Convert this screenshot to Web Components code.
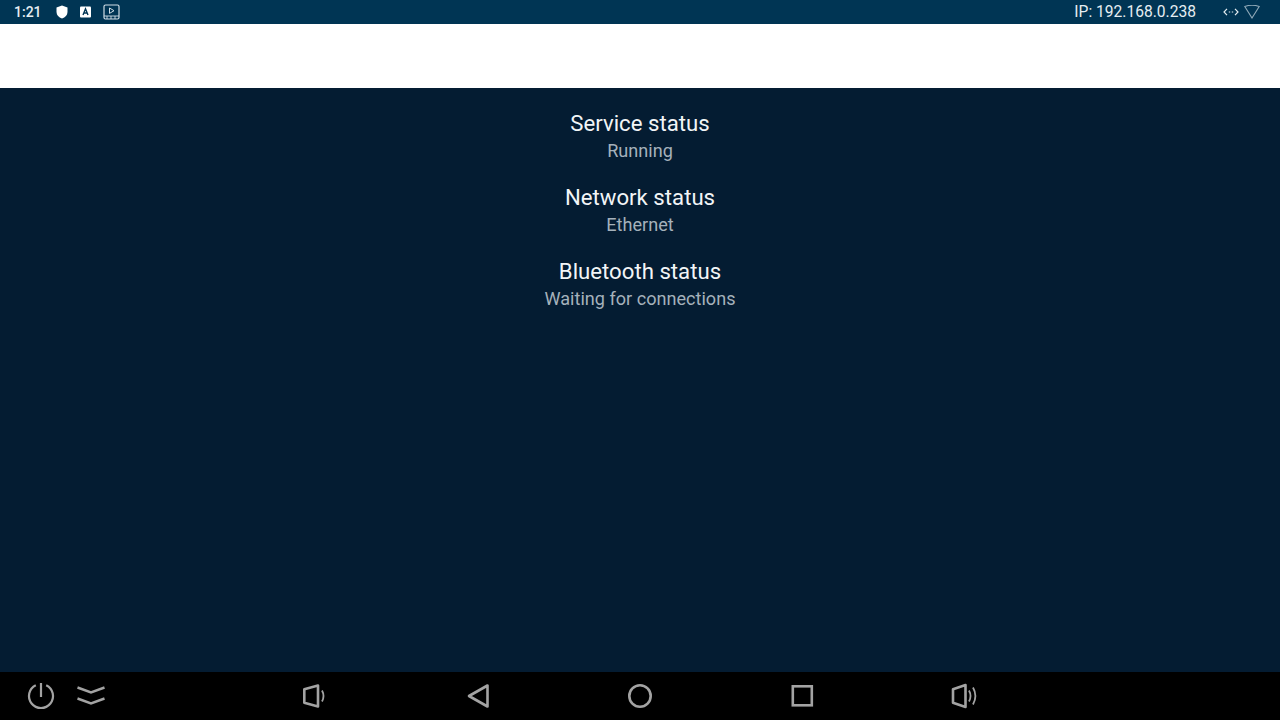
<!DOCTYPE html>
<html lang="en">
<head>
<meta charset="UTF-8">
<title>Status</title>
<style>
  html, body { margin: 0; height: 100%; background: #041c32; font-family: Roboto, sans-serif; }
  body { display: flex; flex-direction: column; height: 720px; overflow: hidden; }
  main-panel { flex: 1; }
</style>
</head>
<body>
  <status-bar time="1:21" ip="IP: 192.168.0.238"></status-bar>
  <action-bar></action-bar>
  <main-panel>
    <status-item title="Service status">Running</status-item>
    <status-item title="Network status">Ethernet</status-item>
    <status-item title="Bluetooth status">Waiting for connections</status-item>
  </main-panel>
  <nav-bar></nav-bar>

<script>
  class StatusBar extends HTMLElement {
    connectedCallback() {
      const root = this.attachShadow({ mode: 'open' })
      root.innerHTML = `
        <style>
          :host { display: flex; height: 24px; background: #003554; color: #e6eef2; align-items: center; padding: 0 20px 0 14px; }
          .left, .right { display: flex; align-items: center; }
          .right { margin-left: auto; }
          .time { font-weight: 500; font-size: 14px; width: 40px; }
          svg { display: block; }
          .ip { font-size: 15.6px; margin-right: 27px; }
        </style>
        <div class="left">
          <span class="time">${this.getAttribute('time')}</span>
          <svg width="16" height="16" viewBox="0 0 16 16" style="margin-right:9px"><path d="M8 1.500 13.500 3.400V8c0 3-2.300 5.400-5.500 6.600C4.800 13.400 2.500 11 2.500 8V3.400Z" fill="#fff"/></svg>
          <svg width="13" height="14" viewBox="0 0 13 14" style="margin-right:11px"><rect x="1" y="1.500" width="11" height="11" rx="1" fill="#fff"/><path d="M4 10 6.500 3.800 9 10M4.800 8h3.400" fill="none" stroke="#003554" stroke-width="1.400"/></svg>
          <svg width="17" height="17" viewBox="0 0 17 17"><rect x="1" y="1" width="15" height="14" rx="1.500" fill="none" stroke="#cfdde5" stroke-width="1.200"/><path d="M1 12h15M4 15v-3M8 15v-3M12 15v-3" stroke="#cfdde5" stroke-width=".9"/><path d="M6.500 4 11 6.700 6.500 9.400Z" fill="none" stroke="#cfdde5" stroke-width="1"/></svg>
        </div>
        <div class="right">
          <span class="ip">${this.getAttribute('ip')}</span>
          <svg width="16" height="10" viewBox="0 0 16 10" style="margin-right:5px"><path d="M4 1.800 1 5l3 3.200M12 1.800 15 5l-3 3.200" fill="none" stroke="#e6eef2" stroke-width="1.200"/><path d="M5.800 5h1.400M8.800 5h1.400" stroke="#e6eef2" stroke-width="1.200"/></svg>
          <svg width="16" height="14" viewBox="0 0 16 14"><path d="M.8 1.500Q8-1.200 15.200 1.500L8 13Z" fill="none" stroke="#8fa9b8" stroke-width="1.100"/></svg>
        </div>`
    }
  }

  class ActionBar extends HTMLElement {
    connectedCallback() {
      const root = this.attachShadow({ mode: 'open' })
      root.innerHTML = `<style>:host { display: block; height: 64px; background: #fff; }</style>`
    }
  }

  class MainPanel extends HTMLElement {
    connectedCallback() {
      const root = this.attachShadow({ mode: 'open' })
      root.innerHTML = `
        <style>
          :host { display: flex; flex-direction: column; align-items: center; background: #041c32; padding-top: 22px; gap: 22px; }
        </style>
        <slot></slot>`
    }
  }

  class StatusItem extends HTMLElement {
    connectedCallback() {
      const root = this.attachShadow({ mode: 'open' })
      root.innerHTML = `
        <style>
          :host { display: flex; flex-direction: column; align-items: center; }
          .title { font-size: 22.2px; line-height: 26px; padding-bottom: 2px; color: #f2f5f7; }
          .sub { font-size: 18.1px; line-height: 24px; color: #a5b1bb; padding-top: 1px; margin-bottom: -1px; }
        </style>
        <div class="title">${this.getAttribute('title')}</div>
        <div class="sub"><slot></slot></div>`
    }
  }

  class NavButton extends HTMLElement {
    connectedCallback() {
      const root = this.attachShadow({ mode: 'open' })
      root.innerHTML = `
        <style>
          :host { display: flex; width: 50px; height: 48px; align-items: center; justify-content: center; }
        </style>
        <slot></slot>`
    }
  }

  class NavBar extends HTMLElement {
    connectedCallback() {
      const root = this.attachShadow({ mode: 'open' })
      root.innerHTML = `
        <style>
          :host { display: flex; height: 48px; background: #000; padding-left: 16px; }
          .gap-l { margin-left: 173px; }
          .gap-w { margin-left: 114px; }
          .gap { margin-left: 112px; }
          svg { display: block; fill: none; stroke: #a3a3a3; }
        </style>
        <nav-button><svg width="30" height="30" viewBox="0 0 30 30" stroke-width="2.200"><path d="M9.800 4.200a12 12 0 1 0 10.400 0"/><path d="M15 2v14"/></svg></nav-button>
        <nav-button><svg width="30" height="24" viewBox="0 0 30 24" stroke-width="2.400"><path d="M1.500 3.500 15 8.500 28.500 3.500M1.500 14.500 15 19.500 28.500 14.500"/></svg></nav-button>
        <nav-button class="gap-l"><svg width="24" height="26" viewBox="0 0 24 26" stroke-width="2.600"><path d="M2.300 6.200 16 2.500v21L2.300 19.800Z" stroke-linejoin="round"/><path d="M20 7.500q3 5.500 0 11" stroke-width="1.800"/></svg></nav-button>
        <nav-button class="gap-w"><svg width="24" height="26" viewBox="0 0 24 26" stroke-width="2.600"><path d="M3 13 21.500 2.500v21Z" stroke-linejoin="round"/></svg></nav-button>
        <nav-button class="gap"><svg width="26" height="26" viewBox="0 0 26 26" stroke-width="2.600"><circle cx="13" cy="13" r="10.700"/></svg></nav-button>
        <nav-button class="gap"><svg width="24" height="24" viewBox="0 0 24 24" stroke-width="2.600"><rect x="2.800" y="2.300" width="19" height="19"/></svg></nav-button>
        <nav-button class="gap"><svg width="28" height="26" viewBox="0 0 28 26" stroke-width="2.600"><path d="M3 6.200 15.500 2v22L3 19.800Z" stroke-linejoin="round"/><path d="M19 7.500q3 5.500 0 11M23 4.500q4.800 8.500 0 17" stroke-width="1.800"/></svg></nav-button>`
    }
  }

  customElements.define('status-bar', StatusBar)
  customElements.define('action-bar', ActionBar)
  customElements.define('main-panel', MainPanel)
  customElements.define('status-item', StatusItem)
  customElements.define('nav-button', NavButton)
  customElements.define('nav-bar', NavBar)
</script>
</body>
</html>
